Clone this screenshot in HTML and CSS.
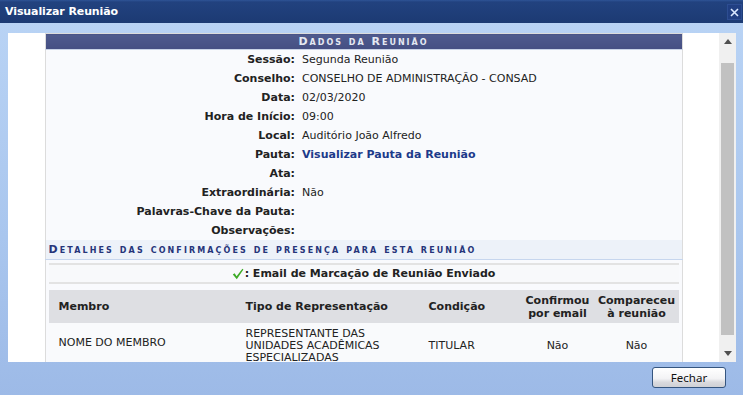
FILE: index.html
```html
<!DOCTYPE html>
<html lang="pt-BR">
<head>
    <meta charset="UTF-8">
    <title>Visualizar Reunião</title>
    <link rel="stylesheet" href="styles.css">
</head>
<body>
    <div class="janela">
        <div class="barra-titulo">
            <span class="titulo">Visualizar Reunião</span>
            <button class="fechar-x" title="Fechar">
                <svg width="9" height="9" viewBox="0 0 9 9"><path d="M1 1 L8 8 M8 1 L1 8" stroke="#dbe8ff" stroke-width="1.6"/></svg>
            </button>
        </div>
        <div class="corpo">
            <div class="conteudo" id="conteudo">
                <table class="formulario">
                    <thead>
                        <tr><td colspan="2" class="cabecalho">Dados da Reunião</td></tr>
                    </thead>
                    <tbody>
                        <tr><th>Sessão:</th><td>Segunda Reunião</td></tr>
                        <tr><th>Conselho:</th><td>CONSELHO DE ADMINISTRAÇÃO - CONSAD</td></tr>
                        <tr><th>Data:</th><td>02/03/2020</td></tr>
                        <tr><th>Hora de Início:</th><td>09:00</td></tr>
                        <tr><th>Local:</th><td>Auditório João Alfredo</td></tr>
                        <tr><th>Pauta:</th><td><a href="#" class="link">Visualizar Pauta da Reunião</a></td></tr>
                        <tr><th>Ata:</th><td></td></tr>
                        <tr><th>Extraordinária:</th><td>Não</td></tr>
                        <tr><th>Palavras-Chave da Pauta:</th><td></td></tr>
                        <tr><th>Observações:</th><td></td></tr>
                        <tr><td colspan="2" class="subtitulo">Detalhes das confirmações de presença para esta reunião</td></tr>
                        <tr>
                            <td colspan="2" class="area-lista">
                                <div class="legenda">
                                    <svg class="check" width="12" height="12" viewBox="0 0 12 12"><path d="M0.8 6.4 L2.6 5.2 L4.6 8.2 L10.4 0.8 L11.4 1.6 L4.8 11.2 Z" fill="#3dab27"/></svg>: Email de Marcação de Reunião Enviado
                                </div>
                                <table class="listagem">
                                    <colgroup>
                                        <col class="c-membro">
                                        <col class="c-tipo">
                                        <col class="c-condicao">
                                        <col class="c-confirmou">
                                        <col class="c-compareceu">
                                    </colgroup>
                                    <thead>
                                        <tr>
                                            <th class="membro">Membro</th>
                                            <th>Tipo de Representação</th>
                                            <th>Condição</th>
                                            <th class="centro">Confirmou por email</th>
                                            <th class="centro">Compareceu à reunião</th>
                                        </tr>
                                    </thead>
                                    <tbody>
                                        <tr>
                                            <td class="membro">NOME DO MEMBRO</td>
                                            <td>REPRESENTANTE DAS UNIDADES ACADÊMICAS ESPECIALIZADAS</td>
                                            <td>TITULAR</td>
                                            <td class="centro">Não</td>
                                            <td class="centro">Não</td>
                                        </tr>
                                    </tbody>
                                </table>
                            </td>
                        </tr>
                    </tbody>
                </table>
            </div>
            <div class="rolagem">
                <div class="seta">
                    <svg width="8" height="5" viewBox="0 0 8 5"><path d="M0 5 L4 0 L8 5 Z" fill="#505050"/></svg>
                </div>
                <div class="trilho"><div class="polegar"></div></div>
                <div class="seta">
                    <svg width="8" height="5" viewBox="0 0 8 5"><path d="M0 0 L8 0 L4 5 Z" fill="#505050"/></svg>
                </div>
            </div>
        </div>
        <div class="rodape">
            <button class="botao">Fechar</button>
        </div>
    </div>
    <script>
        document.getElementById("conteudo").scrollTop = 16;
    </script>
</body>
</html>
```

FILE: styles.css
```css
* {
    margin: 0;
    padding: 0;
    box-sizing: border-box;
}

body {
    width: 743px;
    height: 395px;
    overflow: hidden;
    font-family: "DejaVu Sans", Verdana, sans-serif;
    font-size: 11px;
    color: #222;
}

.janela {
    height: 395px;
    display: flex;
    flex-direction: column;
    background: linear-gradient(#bad4f5 0%, #a9c6ee 60%, #9dbae7 100%);
}

.barra-titulo {
    height: 23px;
    display: flex;
    align-items: center;
    justify-content: space-between;
    padding: 0 1px 0 5px;
    background: linear-gradient(#2f5496 0px, #22427f 2px, #1c3a73 100%);
}

.titulo {
    color: #fff;
    font-weight: bold;
    font-size: 11px;
    letter-spacing: -0.1px;
}

.fechar-x {
    width: 15px;
    height: 16px;
    display: flex;
    align-items: center;
    justify-content: center;
    background: #213f82;
    border: 1px solid #2d4d92;
    margin-top: 1px;
}

.corpo {
    display: flex;
    height: 339px;
    padding: 10px 7px 0 8px;
}

.conteudo {
    flex: 1;
    height: 329px;
    background: #fff;
    overflow: hidden;
    padding-top: 16px;
    padding-bottom: 30px;
}

.rolagem {
    width: 17px;
    height: 329px;
    display: flex;
    flex-direction: column;
    background: #f0f0f0;
}

.seta {
    height: 17px;
    display: flex;
    align-items: center;
    justify-content: center;
}

.trilho {
    flex: 1;
    padding: 13px 2px 10px 2px;
    display: flex;
}

.polegar {
    flex: 1;
    background: #c1c1c1;
}

.formulario {
    width: 638px;
    margin: 0 auto;
    border-collapse: collapse;
    border: 1px solid #dcdcdc;
    background: #f9fafd;
}

.formulario .cabecalho {
    height: 16px;
    background: linear-gradient(#4f5b8e, #454f83);
    color: #e4e8f2;
    text-align: center;
    font-weight: bold;
    font-variant: small-caps;
    letter-spacing: 2px;
    font-size: 11px;
    line-height: 14px;
    border-bottom: 1px solid #c9d3e6;
}

.formulario > tbody > tr > th {
    width: 252px;
    text-align: right;
    padding-right: 2px;
    height: 19px;
    font-weight: bold;
    white-space: nowrap;
}

.formulario > tbody > tr > td {
    padding-left: 5px;
    height: 19px;
}

.link {
    color: #1d3a8a;
    font-weight: bold;
    text-decoration: none;
}

.formulario .subtitulo {
    height: 20px;
    padding-left: 3px;
    background: #edf2f9;
    border-bottom: 1px solid #c6d6ee;
    color: #26357a;
    font-weight: bold;
    font-variant: small-caps;
    letter-spacing: 2.1px;
    font-size: 11px;
    white-space: nowrap;
}

.formulario .area-lista {
    padding: 3px 3px 0 3px;
}

.legenda {
    height: 21px;
    display: flex;
    align-items: center;
    justify-content: center;
    background: #f8f9fb;
    border-top: 2px solid #e3e3e3;
    border-bottom: 2px solid #e3e3e3;
    font-weight: bold;
    margin-bottom: 6px;
}

.check {
    margin-right: 1px;
}

.listagem {
    width: 100%;
    table-layout: fixed;
    border-collapse: collapse;
}

.c-membro { width: 192px; }
.c-tipo { width: 183px; }
.c-condicao { width: 97px; }
.c-confirmou { width: 74px; }
.c-compareceu { width: 84px; }

.listagem th {
    background: #dedfe3;
    height: 33px;
    text-align: left;
    padding: 0 5px;
    font-weight: bold;
    line-height: 13px;
}

.listagem td {
    background: #f9fafc;
    padding: 5px 5px;
    line-height: 12px;
}

.listagem .membro {
    padding-left: 10px;
}

.listagem td.membro {
    padding-bottom: 11px;
}

.listagem .centro {
    text-align: center;
    padding: 0;
}

.rodape {
    display: flex;
    justify-content: flex-end;
    padding: 5px 17px 0 0;
}

.botao {
    width: 74px;
    height: 21px;
    border: 1px solid #35557f;
    border-radius: 3px;
    background: linear-gradient(#ffffff 0%, #f3f3f5 55%, #dadade 75%, #cfd0d5 100%);
    font-family: "Noto Sans", sans-serif;
    font-size: 11.5px;
    color: #111;
}
```
